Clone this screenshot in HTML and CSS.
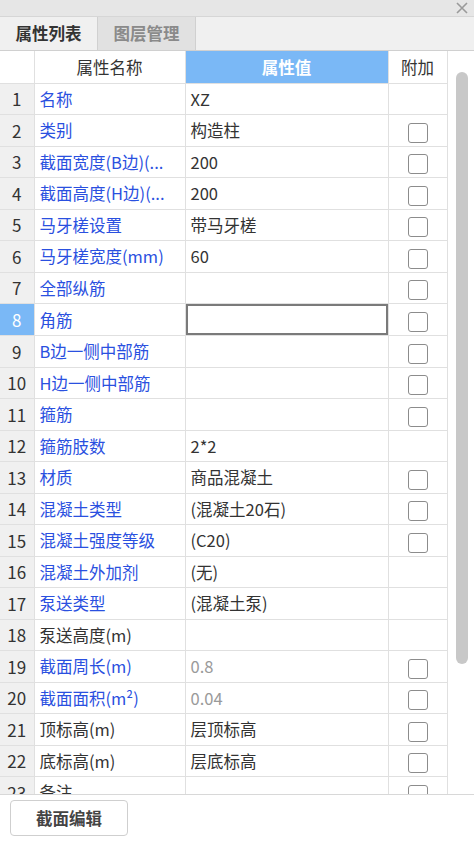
FILE: index.html
```html
<!DOCTYPE html>
<html lang="zh-CN">
<head>
    <meta charset="UTF-8">
    <meta name="viewport" content="width=device-width, initial-scale=1.0">
    <title>属性列表</title>
    <link rel="stylesheet" href="styles.css">
</head>
<body>
    <div class="panel">
        <div class="titlebar">
            <svg class="close" width="12" height="12" viewBox="0 0 12 12">
                <path d="M1 1 L11 11 M11 1 L1 11" stroke="#9a9a9a" stroke-width="1.6" fill="none"/>
            </svg>
        </div>
        <div class="tabs">
            <div class="tab active">属性列表</div>
            <div class="tab">图层管理</div>
        </div>

        <div class="grid-wrap">
            <div class="grid">
                <table>
                    <colgroup>
                        <col class="c-num">
                        <col class="c-name">
                        <col class="c-value">
                        <col class="c-extra">
                    </colgroup>
                    <thead>
                        <tr>
                            <th class="num"></th>
                            <th>属性名称</th>
                            <th class="sel">属性值</th>
                            <th>附加</th>
                        </tr>
                    </thead>
                    <tbody id="rows"></tbody>
                </table>
            </div>
            <div class="scroll">
                <div class="thumb"></div>
            </div>
        </div>

        <div class="footer">
            <button class="btn">截面编辑</button>
        </div>
    </div>

    <script>
        // 属性数据：名称, 值, 名称颜色(blue/black), 值是否灰色, 是否有附加勾选框
        const props = [
            ["名称", "XZ", "blue", false, false],
            ["类别", "构造柱", "blue", false, true],
            ["截面宽度(B边)(...", "200", "blue", false, true],
            ["截面高度(H边)(...", "200", "blue", false, true],
            ["马牙槎设置", "带马牙槎", "blue", false, true],
            ["马牙槎宽度(mm)", "60", "blue", false, true],
            ["全部纵筋", "", "blue", false, true],
            ["角筋", "", "blue", false, true],
            ["B边一侧中部筋", "", "blue", false, true],
            ["H边一侧中部筋", "", "blue", false, true],
            ["箍筋", "", "blue", false, true],
            ["箍筋肢数", "2*2", "blue", false, false],
            ["材质", "商品混凝土", "blue", false, true],
            ["混凝土类型", "(混凝土20石)", "blue", false, true],
            ["混凝土强度等级", "(C20)", "blue", false, true],
            ["混凝土外加剂", "(无)", "blue", false, false],
            ["泵送类型", "(混凝土泵)", "blue", false, false],
            ["泵送高度(m)", "", "black", false, false],
            ["截面周长(m)", "0.8", "blue", true, true],
            ["截面面积(m²)", "0.04", "blue", true, true],
            ["顶标高(m)", "层顶标高", "black", false, true],
            ["底标高(m)", "层底标高", "black", false, true],
            ["备注", "", "black", false, true]
        ];

        const tbody = document.getElementById("rows");
        props.forEach((p, i) => {
            const tr = document.createElement("tr");
            const current = i === 7;
            tr.innerHTML = `
                <td class="num${current ? " cur" : ""}">${i + 1}</td>
                <td class="name ${p[2]}">${p[0]}</td>
                <td class="value${p[3] ? " dim" : ""}">${current ? '<div class="edit"></div>' : p[1]}</td>
                <td class="extra">${p[4] ? '<span class="check"></span>' : ""}</td>
            `;
            tbody.appendChild(tr);
        });
    </script>
</body>
</html>
```

FILE: styles.css
```css
* {
    box-sizing: border-box;
}

body {
    margin: 0;
    font-family: "Noto Sans CJK SC", "Noto Sans", sans-serif;
    background: #ffffff;
    color: #333;
}

.panel {
    width: 474px;
    height: 841px;
    display: flex;
    flex-direction: column;
    overflow: hidden;
}

.titlebar {
    height: 17px;
    background: #e6e6e6;
    border-bottom: 1px solid #d6d6d6;
    display: flex;
    justify-content: flex-end;
    align-items: center;
    padding-right: 6px;
}

.tabs {
    height: 35px;
    display: flex;
    background: #f0f0f0;
    border-bottom: 1px solid #d0d0d0;
}

.tab {
    width: 98px;
    display: flex;
    align-items: center;
    justify-content: center;
    font-size: 16.5px;
    font-weight: bold;
    color: #8a8a8a;
    background: #e1e1e1;
    border-right: 1px solid #d0d0d0;
}

.tab.active {
    color: #333;
    background: #f0f0f0;
}

.grid-wrap {
    height: 744px;
    display: flex;
    border-bottom: 1px solid #d8d8d8;
}

.grid {
    width: 447px;
    overflow: hidden;
}

table {
    border-collapse: collapse;
    table-layout: fixed;
    width: 447px;
    font-size: 16.5px;
}

.c-num { width: 34px; }
.c-name { width: 151px; }
.c-value { width: 203px; }
.c-extra { width: 59px; }

th, td {
    border: 1px solid #e0e0e0;
    padding: 0;
    white-space: nowrap;
    overflow: hidden;
}

tr:first-child th {
    border-top: none;
}

th:first-child, td:first-child {
    border-left: none;
}

th {
    height: 32px;
    font-weight: normal;
    color: #333;
    text-align: center;
}

th.sel {
    background: #7ab8f6;
    color: #fff;
    font-weight: bold;
}

td {
    height: 31.5px;
}

td.num {
    background: #f0f0f0;
    text-align: center;
    color: #333;
    font-size: 17px;
}

td.num.cur {
    background: #7ab8f6;
    color: #fff;
}

td.name {
    padding-left: 5px;
}

td.name.blue {
    color: #2a50e0;
}

td.name.black {
    color: #333;
}

td.value {
    padding-left: 5px;
    color: #333;
}

td.value.dim {
    color: #9a9a9a;
}

td.value:has(.edit) {
    padding: 0;
}

.edit {
    height: 31px;
    border: 2px solid #7a7a7a;
}

td.extra {
    text-align: center;
}

.check {
    display: inline-block;
    width: 20px;
    height: 20px;
    border: 1.5px solid #8c8c8c;
    border-radius: 3px;
    vertical-align: middle;
    background: #fff;
}

.scroll {
    width: 27px;
    border-left: 1px solid #e0e0e0;
    padding: 21px 0 0 8px;
}

.thumb {
    width: 12px;
    height: 592px;
    border-radius: 6px;
    background: #c8c8c8;
}

.footer {
    flex: 1;
    padding: 5px 10px;
}

.btn {
    width: 118px;
    height: 36px;
    background: #fff;
    border: 1px solid #cfcfcf;
    border-radius: 4px;
    font-family: inherit;
    font-size: 16.5px;
    font-weight: bold;
    color: #444;
}
```
